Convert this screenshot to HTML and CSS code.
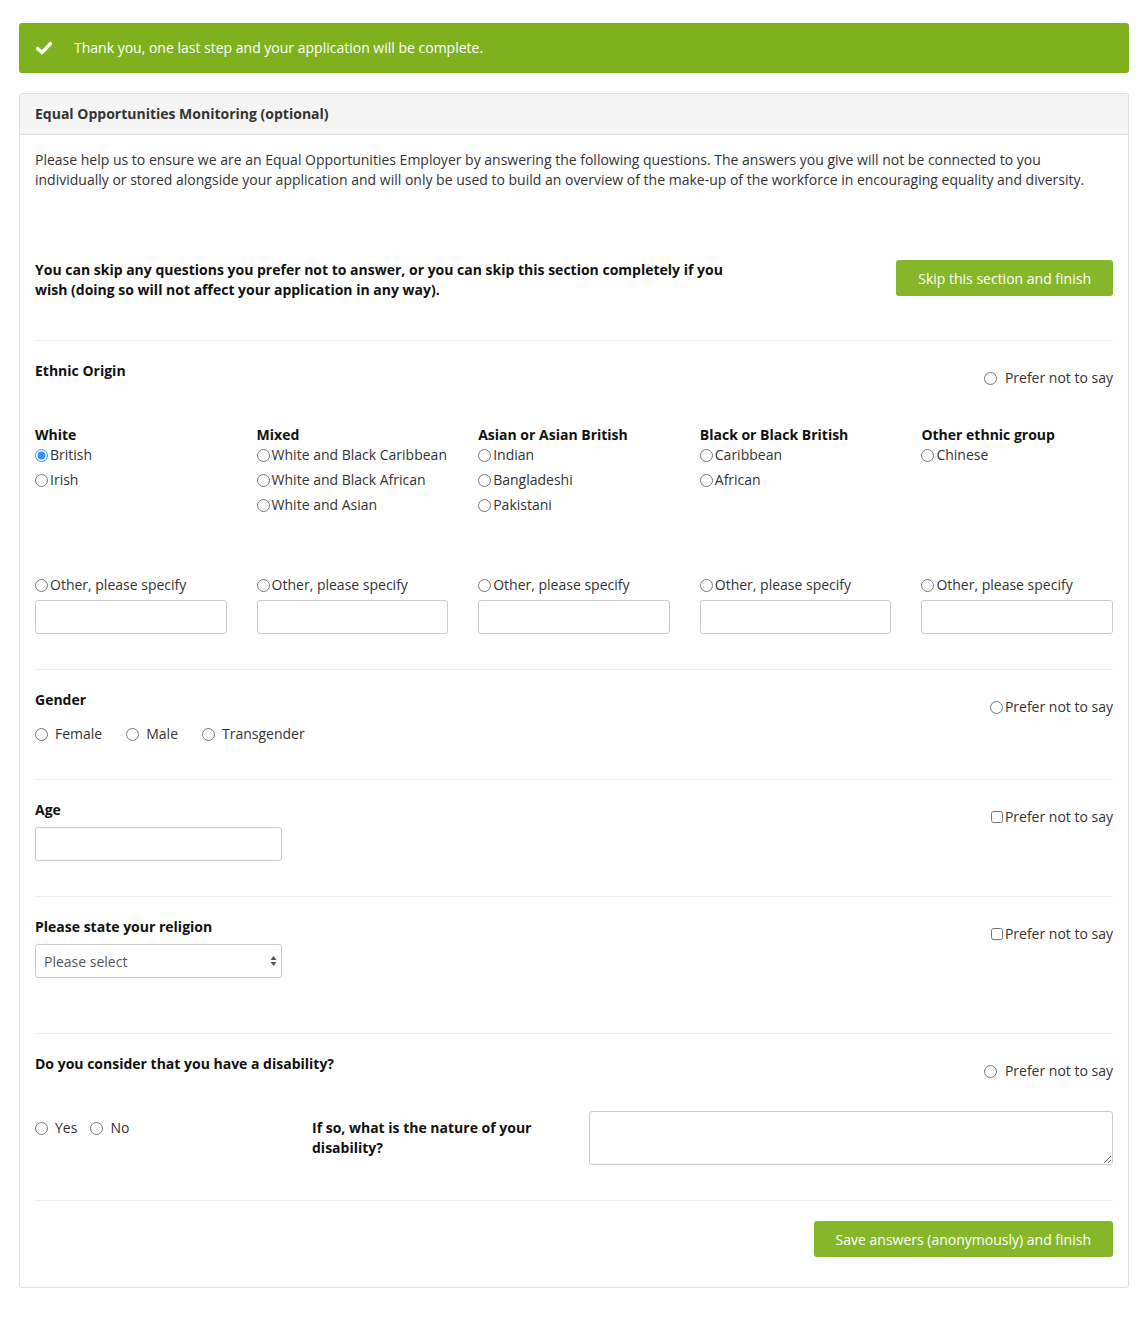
FILE: index.html
```html
<!DOCTYPE html>
<html lang="en">
<head>
<meta charset="utf-8">
<title>Equal Opportunities Monitoring</title>
<link rel="stylesheet" href="styles.css">
</head>
<body>
<div class="page">
  <div class="alert">
    <svg class="alert-icon" width="16" height="14" viewBox="0 0 16 14"><path d="M1.5 7.5 L6 11.5 L14.5 2.5" fill="none" stroke="#fff" stroke-width="3.4" stroke-linecap="round" stroke-linejoin="round"/></svg>
    <span>Thank you, one last step and your application will be complete.</span>
  </div>

  <div class="panel">
    <div class="panel-heading">Equal Opportunities Monitoring (optional)</div>
    <div class="panel-body">
      <p class="intro">Please help us to ensure we are an Equal Opportunities Employer by answering the following questions. The answers you give will not be connected to you individually or stored alongside your application and will only be used to build an overview of the make-up of the workforce in encouraging equality and diversity.</p>

      <div class="skip-row">
        <p class="skip-text">You can skip any questions you prefer not to answer, or you can skip this section completely if you wish (doing so will not affect your application in any way).</p>
        <button class="btn">Skip this section and finish</button>
      </div>

      <hr class="sep sep-first">

      <div class="q-head">
        <div class="q-title">Ethnic Origin</div>
        <label class="prefer gap"><input type="radio" name="eth">Prefer not to say</label>
      </div>

      <div class="eth-grid">
        <div class="eth-col">
          <div class="eth-title">White</div>
          <div class="eth-list">
            <label class="opt"><input type="radio" name="eth" checked>British</label>
            <label class="opt"><input type="radio" name="eth">Irish</label>
          </div>
          <label class="opt"><input type="radio" name="eth">Other, please specify</label>
          <input class="text-input" type="text">
        </div>
        <div class="eth-col">
          <div class="eth-title">Mixed</div>
          <div class="eth-list">
            <label class="opt"><input type="radio" name="eth">White and Black Caribbean</label>
            <label class="opt"><input type="radio" name="eth">White and Black African</label>
            <label class="opt"><input type="radio" name="eth">White and Asian</label>
          </div>
          <label class="opt"><input type="radio" name="eth">Other, please specify</label>
          <input class="text-input" type="text">
        </div>
        <div class="eth-col">
          <div class="eth-title">Asian or Asian British</div>
          <div class="eth-list">
            <label class="opt"><input type="radio" name="eth">Indian</label>
            <label class="opt"><input type="radio" name="eth">Bangladeshi</label>
            <label class="opt"><input type="radio" name="eth">Pakistani</label>
          </div>
          <label class="opt"><input type="radio" name="eth">Other, please specify</label>
          <input class="text-input" type="text">
        </div>
        <div class="eth-col">
          <div class="eth-title">Black or Black British</div>
          <div class="eth-list">
            <label class="opt"><input type="radio" name="eth">Caribbean</label>
            <label class="opt"><input type="radio" name="eth">African</label>
          </div>
          <label class="opt"><input type="radio" name="eth">Other, please specify</label>
          <input class="text-input" type="text">
        </div>
        <div class="eth-col">
          <div class="eth-title">Other ethnic group</div>
          <div class="eth-list">
            <label class="opt"><input type="radio" name="eth">Chinese</label>
          </div>
          <label class="opt"><input type="radio" name="eth">Other, please specify</label>
          <input class="text-input" type="text">
        </div>
      </div>

      <hr class="sep">

      <div class="q-head">
        <div class="q-title">Gender</div>
        <label class="prefer"><input type="radio" name="gender">Prefer not to say</label>
      </div>
      <div class="inline-opts">
        <label class="opt gap"><input type="radio" name="gender">Female</label>
        <label class="opt gap"><input type="radio" name="gender">Male</label>
        <label class="opt gap"><input type="radio" name="gender">Transgender</label>
      </div>

      <hr class="sep">

      <div class="q-head">
        <div class="q-title">Age</div>
        <label class="prefer"><input type="checkbox">Prefer not to say</label>
      </div>
      <input class="text-input narrow" type="text">

      <hr class="sep">

      <div class="q-head">
        <div class="q-title">Please state your religion</div>
        <label class="prefer"><input type="checkbox">Prefer not to say</label>
      </div>
      <div class="select-wrap">
        <select class="select">
          <option>Please select</option>
        </select>
        <svg class="select-arrows" width="7" height="12" viewBox="0 0 7 12"><path d="M3.5 1 L6.5 5 L0.5 5 Z M3.5 11 L6.5 7 L0.5 7 Z" fill="#555"/></svg>
      </div>

      <hr class="sep sep-big">

      <div class="q-head">
        <div class="q-title">Do you consider that you have a disability?</div>
        <label class="prefer gap"><input type="radio" name="dis">Prefer not to say</label>
      </div>
      <div class="dis-grid">
        <div class="dis-opts">
          <label class="opt gap-s"><input type="radio" name="dis">Yes</label>
          <label class="opt gap-s"><input type="radio" name="dis">No</label>
        </div>
        <div class="dis-label">If so, what is the nature of your disability?</div>
        <textarea class="textarea"></textarea>
      </div>

      <hr class="sep">

      <div class="save-row">
        <button class="btn">Save answers (anonymously) and finish</button>
      </div>
    </div>
  </div>
</div>
</body>
</html>
```

FILE: styles.css
```css
* { box-sizing: border-box; }

html, body {
  margin: 0;
  padding: 0;
  background: #fff;
}

body {
  font-family: "Open Sans", "Liberation Sans", sans-serif;
  font-size: 14px;
  line-height: 20px;
  color: #333;
}

.page {
  padding: 23px 19px 30px;
}

.alert {
  display: flex;
  align-items: center;
  height: 50px;
  padding: 0 17px;
  background: #7fb11f;
  border-radius: 3px;
  color: #fff;
  font-size: 14px;
}

.alert-icon {
  margin-right: 22px;
  flex: none;
}

.panel {
  margin-top: 20px;
  border: 1px solid #ddd;
  border-radius: 3px;
}

.panel-heading {
  padding: 10px 15px;
  background: #f5f5f5;
  border-bottom: 1px solid #ddd;
  font-weight: 700;
  color: #333;
}

.panel-body {
  padding: 15px 15px 30px;
}

.intro {
  margin: 0;
}

.skip-row {
  display: flex;
  justify-content: space-between;
  align-items: flex-start;
  margin-top: 70px;
}

.skip-text {
  margin: 0;
  width: 700px;
  font-weight: 700;
  color: #111;
}

.btn {
  height: 36px;
  padding: 0 22px;
  border: 0;
  border-radius: 3px;
  background: #86b72a;
  color: #fff;
  font-family: "Open Sans", "Liberation Sans", sans-serif;
  font-size: 14px;
  cursor: pointer;
}

.sep {
  border: 0;
  border-top: 1px solid #eee;
  margin: 35px 0 20px;
}

.sep-first {
  margin-top: 40px;
}

.sep-big {
  margin-top: 55px;
}

.q-head {
  display: flex;
  justify-content: space-between;
  align-items: flex-start;
}

.q-title {
  font-weight: 700;
  color: #111;
}

.prefer {
  display: flex;
  align-items: center;
  margin-top: 7px;
  color: #333;
}

.prefer input {
  margin: 0 1px 0 0;
}

.prefer.gap input {
  margin-right: 8px;
}

input[type="radio"],
input[type="checkbox"] {
  width: 13px;
  height: 13px;
  margin: 0 2px 0 0;
  accent-color: #3a8ff5;
  flex: none;
}

input[type="checkbox"] {
  width: 12px;
  height: 12px;
}

.eth-grid {
  display: grid;
  grid-template-columns: repeat(5, 1fr);
  column-gap: 30px;
  margin-top: 37px;
}

.eth-col {
  display: flex;
  flex-direction: column;
}

.eth-title {
  font-weight: 700;
  color: #111;
}

.eth-list {
  height: 130px;
}

.opt {
  display: flex;
  align-items: center;
  height: 20px;
  margin-bottom: 5px;
  white-space: nowrap;
}

.eth-list .opt:last-child {
  margin-bottom: 0;
}

.opt.gap input {
  margin-right: 7px;
}

.opt.gap-s input {
  margin-right: 7px;
}

.text-input {
  display: block;
  width: 100%;
  height: 34px;
  margin-top: 0;
  border: 1px solid #ccc;
  border-radius: 3px;
  background: #fff;
  font-family: inherit;
  font-size: 14px;
}

.inline-opts {
  display: flex;
  gap: 24px;
  margin-top: 7px;
}

.inline-opts .opt {
  margin-bottom: 0;
}

.narrow {
  width: 247px;
  margin-top: 0;
}

.select-wrap {
  position: relative;
  width: 247px;
  margin-top: 0;
}

.select {
  display: block;
  width: 100%;
  height: 34px;
  padding: 0 24px 0 8px;
  border: 1px solid #ccc;
  border-radius: 3px;
  background: #fff;
  color: #555;
  font-family: "Open Sans", "Liberation Sans", sans-serif;
  font-size: 14px;
  -webkit-appearance: none;
  appearance: none;
}

.select-arrows {
  position: absolute;
  right: 5px;
  top: 11px;
  pointer-events: none;
}

.dis-grid {
  display: grid;
  grid-template-columns: 247px 247px 1fr;
  column-gap: 30px;
  margin-top: 30px;
  align-items: start;
}

.dis-opts {
  display: flex;
  gap: 13px;
  margin-top: 7px;
}

.dis-opts .opt {
  margin-bottom: 0;
}

.dis-label {
  font-weight: 700;
  color: #111;
  line-height: 20px;
  margin-top: 7px;
}

.textarea {
  display: block;
  width: 100%;
  height: 54px;
  border: 1px solid #ccc;
  border-radius: 3px;
  font-family: inherit;
  font-size: 14px;
}

.save-row {
  display: flex;
  justify-content: flex-end;
}
```
